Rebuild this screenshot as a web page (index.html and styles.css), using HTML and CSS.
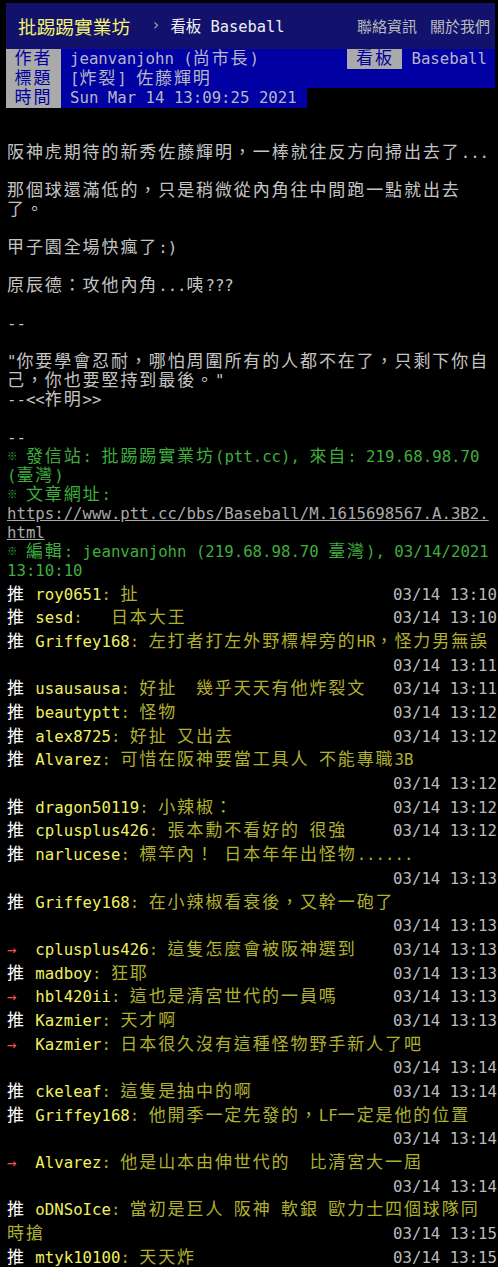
FILE: index.html
```html
<!DOCTYPE html>
<html lang="zh-Hant-TW">
<head>
<meta charset="utf-8">
<title>[炸裂] 佐藤輝明 - 看板 Baseball - 批踢踢實業坊</title>
<link rel="stylesheet" href="styles.css">
</head>
<body>
<div class="topbar">
  <a class="brand" href="#">批踢踢實業坊</a>
  <span class="sep">›</span>
  <a class="board" href="#">看板 Baseball</a>
  <nav class="links"><a href="#">聯絡資訊</a><a href="#">關於我們</a></nav>
</div>
<div class="meta">
  <div class="metaline"><span class="mtag"><span class="w">作者</span></span><span class="mval grow">jeanvanjohn (<span class="w">尚市長</span>)</span><span class="mtag"><span class="w">看板</span></span><span class="mval">Baseball</span></div>
  <div class="metaline"><span class="mtag"><span class="w">標題</span></span><span class="mval grow">[<span class="w">炸裂</span>] <span class="w">佐藤輝明</span></span></div>
  <div class="metaline fit"><span class="mtag"><span class="w">時間</span></span><span class="mval last">Sun Mar 14 13:09:25 2021</span></div>
</div>
<div class="content"><span class="w">阪神虎期待的新秀佐藤輝明，一棒就往反方向掃出去了</span>...

<span class="w">那個球還滿低的，只是稍微從內角往中間跑一點就出去了。</span>

<span class="w">甲子園全場快瘋了</span>:)

<span class="w">原辰德：攻他內角</span>...<span class="w">咦</span>???

--

"<span class="w">你要學會忍耐，哪怕周圍所有的人都不在了，只剩下你自己，你也要堅持到最後。</span>"
--&lt;&lt;<span class="w">祚明</span>&gt;&gt;

--
<span class="green"><span class="ref">※</span> <span class="w">發信站</span>: <span class="w">批踢踢實業坊</span>(ptt.cc), <span class="w">來自</span>: 219.68.98.70 (<span class="w">臺灣</span>)</span>
<span class="green"><span class="ref">※</span> <span class="w">文章網址</span>: </span><a class="url" href="#">https://www.ptt.cc/bbs/Baseball/M.1615698567.A.3B2.html</a>
<span class="green"><span class="ref">※</span> <span class="w">編輯</span>: jeanvanjohn (219.68.98.70 <span class="w">臺灣</span>), 03/14/2021 13:10:10</span></div>
<div class="pushes">
<div class="push"><span class="ptag w">推</span> <span class="uid">roy0651</span><span class="pc">: <span class="w">扯</span></span><span class="time">03/14 13:10</span></div>
<div class="push"><span class="ptag w">推</span> <span class="uid">sesd</span><span class="pc">:   <span class="w">日本大王</span></span><span class="time">03/14 13:10</span></div>
<div class="push"><span class="ptag w">推</span> <span class="uid">Griffey168</span><span class="pc">: <span class="w">左打者打左外野標桿旁的</span>HR<span class="w">，怪力男無誤</span></span><span class="time">03/14 13:11</span></div>
<div class="push"><span class="ptag w">推</span> <span class="uid">usausausa</span><span class="pc">: <span class="w">好扯</span>  <span class="w">幾乎天天有他炸裂文</span></span><span class="time">03/14 13:11</span></div>
<div class="push"><span class="ptag w">推</span> <span class="uid">beautyptt</span><span class="pc">: <span class="w">怪物</span></span><span class="time">03/14 13:12</span></div>
<div class="push"><span class="ptag w">推</span> <span class="uid">alex8725</span><span class="pc">: <span class="w">好扯</span> <span class="w">又出去</span></span><span class="time">03/14 13:12</span></div>
<div class="push"><span class="ptag w">推</span> <span class="uid">Alvarez</span><span class="pc">: <span class="w">可惜在阪神要當工具人</span> <span class="w">不能專職</span>3B</span><span class="time">03/14 13:12</span></div>
<div class="push"><span class="ptag w">推</span> <span class="uid">dragon50119</span><span class="pc">: <span class="w">小辣椒：</span></span><span class="time">03/14 13:12</span></div>
<div class="push"><span class="ptag w">推</span> <span class="uid">cplusplus426</span><span class="pc">: <span class="w">張本勳不看好的</span> <span class="w">很強</span></span><span class="time">03/14 13:12</span></div>
<div class="push"><span class="ptag w">推</span> <span class="uid">narlucese</span><span class="pc">: <span class="w">標竿內！</span> <span class="w">日本年年出怪物</span>......</span><span class="time">03/14 13:13</span></div>
<div class="push"><span class="ptag w">推</span> <span class="uid">Griffey168</span><span class="pc">: <span class="w">在小辣椒看衰後，又幹一砲了</span></span><span class="time">03/14 13:13</span></div>
<div class="push"><span class="ptag arrow">→</span>  <span class="uid">cplusplus426</span><span class="pc">: <span class="w">這隻怎麼會被阪神選到</span></span><span class="time">03/14 13:13</span></div>
<div class="push"><span class="ptag w">推</span> <span class="uid">madboy</span><span class="pc">: <span class="w">狂耶</span></span><span class="time">03/14 13:13</span></div>
<div class="push"><span class="ptag arrow">→</span>  <span class="uid">hbl420ii</span><span class="pc">: <span class="w">這也是清宮世代的一員嗎</span></span><span class="time">03/14 13:13</span></div>
<div class="push"><span class="ptag w">推</span> <span class="uid">Kazmier</span><span class="pc">: <span class="w">天才啊</span></span><span class="time">03/14 13:13</span></div>
<div class="push"><span class="ptag arrow">→</span>  <span class="uid">Kazmier</span><span class="pc">: <span class="w">日本很久沒有這種怪物野手新人了吧</span></span><span class="time">03/14 13:14</span></div>
<div class="push"><span class="ptag w">推</span> <span class="uid">ckeleaf</span><span class="pc">: <span class="w">這隻是抽中的啊</span></span><span class="time">03/14 13:14</span></div>
<div class="push"><span class="ptag w">推</span> <span class="uid">Griffey168</span><span class="pc">: <span class="w">他開季一定先發的，</span>LF<span class="w">一定是他的位置</span></span><span class="time">03/14 13:14</span></div>
<div class="push"><span class="ptag arrow">→</span>  <span class="uid">Alvarez</span><span class="pc">: <span class="w">他是山本由伸世代的</span>  <span class="w">比清宮大一屆</span></span><span class="time">03/14 13:14</span></div>
<div class="push"><span class="ptag w">推</span> <span class="uid">oDNSoIce</span><span class="pc">: <span class="w">當初是巨人</span> <span class="w">阪神</span> <span class="w">軟銀</span> <span class="w">歐力士四個球隊同時搶</span></span><span class="time">03/14 13:15</span></div>
<div class="push"><span class="ptag w">推</span> <span class="uid">mtyk10100</span><span class="pc">: <span class="w">天天炸</span></span><span class="time">03/14 13:15</span></div>
</div>
</body>
</html>
```

FILE: styles.css
```css
:root {
  --col: 9.452px;
  --cjk: 17px;
}

html {
  background: #000;
}

body {
  margin: 0;
  background: #000;
  color: #c4c4c4;
  font-family: "DejaVu Sans Mono", "Noto Sans CJK SC", monospace;
  font-size: 15.7px;
}

a {
  text-decoration: none;
}

/* wide (two-column) CJK runs */
.w {
  font-family: "Noto Sans CJK SC", "Noto Sans CJK TC", sans-serif;
  font-size: var(--cjk);
  letter-spacing: calc(2 * var(--col) - var(--cjk));
  line-height: 0;
}

/* top bar */
.topbar {
  box-sizing: border-box;
  margin: 3px 3px 0 6px;
  height: 46px;
  background: #12126c;
  display: flex;
  align-items: center;
  padding: 0 5px 2px 12px;
  font-size: 15.4px;
}

.brand {
  color: #f4f46a;
  font-family: "Noto Sans CJK SC", sans-serif;
  font-size: 18.7px;
}

.sep {
  color: #aaa;
  margin: 0 10px 0 21px;
}

.board {
  color: #eee;
}

.links {
  margin-left: auto;
  display: flex;
  gap: 13px;
}

.links a {
  color: #bbb;
  font-family: "Noto Sans CJK SC", sans-serif;
  font-size: 15px;
}

/* article meta */
.meta {
  margin: 0 3px 0 6px;
  line-height: 19.7px;
}

.metaline {
  display: flex;
  background: #0000a3;
}

.metaline.fit {
  width: fit-content;
}

.mtag {
  flex: none;
  width: 55px;
  text-align: center;
  background: #aaa;
  color: #0000a0;
}

.mval {
  padding: 0 8px 0 9px;
  color: #b8b8c4;
}

.mval.grow {
  flex: 1;
}

.mval.last {
  padding-right: 10px;
}

/* article body */
.content {
  white-space: pre-wrap;
  overflow-wrap: anywhere;
  line-height: 19px;
  padding: 34.5px 1px 0 7px;
}

.green {
  color: #3fae3f;
}

.url {
  color: #aaa;
  text-decoration: underline;
}

.ref {
  display: inline-block;
  width: var(--col);
  text-align: center;
  font-family: "Noto Sans CJK SC", sans-serif;
  font-size: 10.5px;
  line-height: 10px;
  vertical-align: 2px;
}

/* pushes */
.pushes {
  padding: 3px 1px 0 7px;
}

.push {
  display: flow-root;
  white-space: pre-wrap;
  line-height: 23.68px;
}

.ptag {
  color: #fff;
}

.ptag.arrow {
  color: #f05050;
}

.uid {
  color: #f0f060;
}

.pc {
  color: #b0b030;
}

.time {
  float: right;
  color: #bbb;
}
```
